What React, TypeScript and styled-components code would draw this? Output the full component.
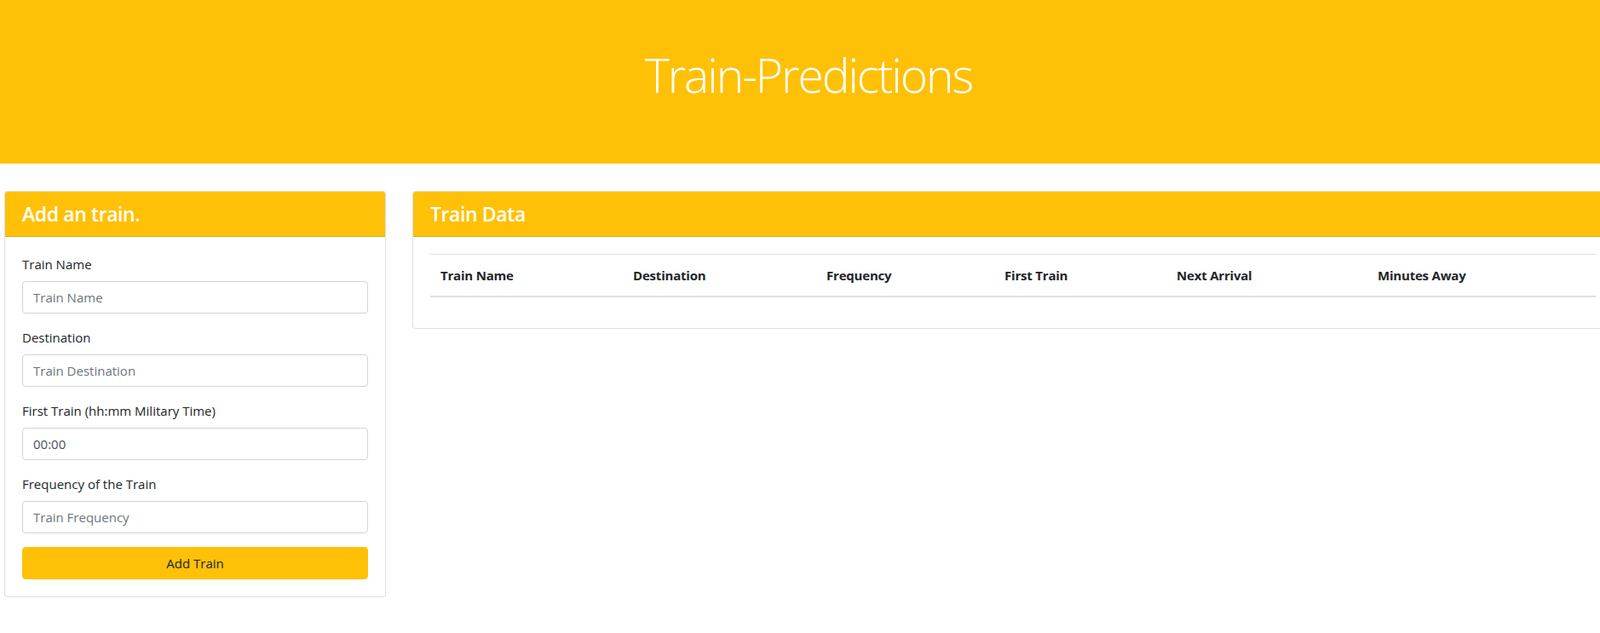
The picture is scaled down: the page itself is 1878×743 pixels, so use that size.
import React from "react";
import styled, { createGlobalStyle } from "styled-components";

const GlobalStyle = createGlobalStyle`
  *, *::before, *::after { box-sizing: border-box; }
  html, body {
    margin: 0;
    padding: 0;
    overflow: hidden;
    background: #fff;
  }
  body {
    font-family: "Open Sans", "Noto Sans", sans-serif;
    font-size: 15px;
    line-height: 1.5;
    color: #212529;
  }
`;

const Page = styled.div`
  width: 1898px;
`;

const Jumbotron = styled.header`
  height: 192px;
  background: #ffc107;
  margin-bottom: 32px;
  padding-top: 54px;
  text-align: center;
`;

const Title = styled.h1`
  margin: 0;
  font-weight: 300;
  font-size: 55px;
  letter-spacing: -2px;
  line-height: 67px;
  color: #fff;
`;

const Columns = styled.main`
  display: flex;
  align-items: flex-start;
  gap: 31px;
  padding-left: 5px;
`;

const Card = styled.section<{ $width: number }>`
  flex: none;
  width: ${(p) => p.$width}px;
  background: #fff;
  border: 1px solid rgba(0, 0, 0, 0.125);
  border-radius: 4px;
  overflow: hidden;
`;

const CardHeader = styled.div`
  background: #ffc107;
  padding: 12px 20px;
  border-bottom: 1px solid rgba(0, 0, 0, 0.125);
`;

const CardTitle = styled.h4`
  margin: 0;
  font-size: 23px;
  letter-spacing: -0.4px;
  font-weight: 600;
  line-height: 28px;
  color: #fff;
`;

const CardBody = styled.div`
  padding: 20px;
`;

const FormGroup = styled.div`
  margin-bottom: 16px;
`;

const Label = styled.label`
  display: block;
  margin-bottom: 8px;
  font-size: 15px;
  line-height: 24px;
  color: #212529;
`;

const Input = styled.input`
  display: block;
  width: 100%;
  height: 38px;
  padding: 6px 12px;
  font-family: inherit;
  font-size: 15px;
  line-height: 24px;
  color: #495057;
  background: #fff;
  border: 1px solid #ced4da;
  border-radius: 4px;
  outline: none;
  &::placeholder {
    color: #6c757d;
    opacity: 1;
  }
`;

const Button = styled.button`
  display: block;
  width: 100%;
  height: 38px;
  padding: 6px 12px;
  font-family: inherit;
  font-size: 15px;
  line-height: 24px;
  color: #212529;
  background: #ffc107;
  border: 1px solid #ffc107;
  border-radius: 4px;
  cursor: pointer;
`;

const Table = styled.table`
  width: 100%;
  border-collapse: collapse;
  margin-bottom: 16px;
  table-layout: fixed;
`;

const HeadCell = styled.th`
  padding: 12px;
  text-align: left;
  vertical-align: bottom;
  font-weight: 700;
  font-size: 15px;
  letter-spacing: -0.2px;
  line-height: 24px;
  color: #212529;
  border-top: 1px solid #dee2e6;
  border-bottom: 2px solid #dee2e6;
  white-space: nowrap;
`;

const columns: { label: string; width: number }[] = [
  { label: "Train Name", width: 226 },
  { label: "Destination", width: 227 },
  { label: "Frequency", width: 209 },
  { label: "First Train", width: 202 },
  { label: "Next Arrival", width: 236 },
  { label: "Minutes Away", width: 268 },
];

const fields = [
  { id: "train-name", label: "Train Name", placeholder: "Train Name" },
  { id: "destination", label: "Destination", placeholder: "Train Destination" },
  { id: "first-train", label: "First Train (hh:mm Military Time)", value: "00:00" },
  { id: "frequency", label: "Frequency of the Train", placeholder: "Train Frequency" },
];

export default function App() {
  return (
    <Page>
      <GlobalStyle />
      <Jumbotron>
        <Title>Train-Predictions</Title>
      </Jumbotron>
      <Columns>
        <Card $width={448}>
          <CardHeader>
            <CardTitle>Add an train.</CardTitle>
          </CardHeader>
          <CardBody>
            <form onSubmit={(e) => e.preventDefault()}>
              {fields.map((f) => (
                <FormGroup key={f.id}>
                  <Label htmlFor={f.id}>{f.label}</Label>
                  <Input
                    id={f.id}
                    type="text"
                    placeholder={f.placeholder}
                    defaultValue={f.value}
                  />
                </FormGroup>
              ))}
              <Button type="submit">Add Train</Button>
            </form>
          </CardBody>
        </Card>
        <Card $width={1410}>
          <CardHeader>
            <CardTitle>Train Data</CardTitle>
          </CardHeader>
          <CardBody>
            <Table>
              <colgroup>
                {columns.map((c) => (
                  <col key={c.label} style={{ width: c.width }} />
                ))}
              </colgroup>
              <thead>
                <tr>
                  {columns.map((c) => (
                    <HeadCell key={c.label}>{c.label}</HeadCell>
                  ))}
                </tr>
              </thead>
              <tbody />
            </Table>
          </CardBody>
        </Card>
      </Columns>
    </Page>
  );
}
